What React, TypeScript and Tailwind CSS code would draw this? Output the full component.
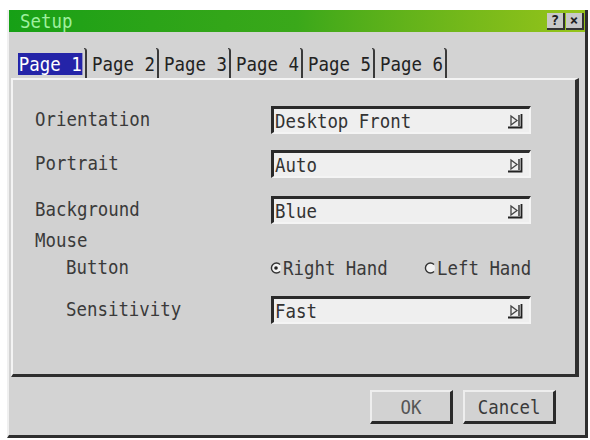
import React from "react";

const mono = { fontFamily: '"DejaVu Sans Mono", "Liberation Mono", monospace' };

// Narrow monospace text, like the projector's on-screen font
function T({ children, className = "" }: { children: React.ReactNode; className?: string }) {
  return (
    <span
      className={"inline-block origin-left scale-x-[0.87] whitespace-pre text-[20px] leading-none " + className}
      style={mono}
    >
      {children}
    </span>
  );
}

function ArrowBox() {
  return (
    <svg width="18" height="16" viewBox="0 0 18 16" className="shrink-0">
      <path d="M5 3 L11 7.5 L5 12 Z" fill="none" stroke="#444" strokeWidth="1.3" />
      <path d="M13 2 V13" stroke="#444" strokeWidth="1.6" />
      <path d="M2 14.5 H15.5 V1" fill="none" stroke="#222" strokeWidth="1.8" />
    </svg>
  );
}

function Select({ value }: { value: string }) {
  return (
    <div className="flex h-[28px] w-[260px] items-center justify-between overflow-hidden border-l-[3px] border-t-[3px] border-b-[2px] border-r-[2px] border-l-[#2a2a2a] border-t-[#2a2a2a] border-b-[#f4f4f4] border-r-[#f4f4f4] bg-[#efefef] pl-[1px] pr-[5px]">
      <T className="text-[#333]">{value}</T>
      <ArrowBox />
    </div>
  );
}

function Radio({ checked }: { checked: boolean }) {
  return (
    <svg width="12" height="12" viewBox="0 0 12 12" className="mr-[1px] shrink-0">
      <circle cx="6" cy="6" r="5" fill="#f2f2f2" />
      <path d="M10 2.5 A5 5 0 1 0 10 9.5" fill="none" stroke="#333" strokeWidth="1.4" />
      {checked && <circle cx="6" cy="6" r="1.8" fill="#222" />}
    </svg>
  );
}

function Tab({ label, active }: { label: string; active?: boolean }) {
  return (
    <div className="relative flex h-[32px] w-[72px] items-end pb-[3px]">
      {active ? (
        <span
          className="ml-[1px] inline-block origin-left scale-x-[0.87] whitespace-pre bg-[#2424a8] px-[1px] text-[20px] leading-[22px] text-white"
          style={mono}
        >
          {label}
        </span>
      ) : (
        <span
          className="ml-[3px] inline-block origin-left scale-x-[0.87] whitespace-pre text-[20px] leading-[22px] text-[#222]"
          style={mono}
        >
          {label}
        </span>
      )}
      <div className="absolute right-[2px] top-[2px] h-[30px] w-[3px] rounded-tr-[4px] border-r-[2px] border-t-[1px] border-r-[#3a3a3a] border-t-[#3a3a3a]" />
    </div>
  );
}

function Btn({ label, wide }: { label: string; wide?: boolean }) {
  return (
    <div
      className={
        "flex h-[34px] items-center justify-center border-l-[2px] border-t-[2px] border-b-[3px] border-r-[3px] border-l-[#eeeeee] border-t-[#eeeeee] border-b-[#2a2a2a] border-r-[#2a2a2a] bg-[#d2d2d2] " +
        (wide ? "w-[93px] text-[#3a3a3a]" : "w-[83px] text-[#555]")
      }
    >
      <span
        className="inline-block origin-center scale-x-[0.87] whitespace-pre text-[20px] leading-none"
        style={mono}
      >
        {label}
      </span>
    </div>
  );
}

export default function App() {
  return (
    <div className="h-[440px] w-[590px] overflow-hidden bg-white pl-[7px] pt-[10px]">
      <div className="flex h-[428px] w-[581px] flex-col border-b-[3px] border-l-[2px] border-r-[3px] border-b-[#2e2e2e] border-l-[#f0f0f0] border-r-[#2e2e2e] bg-[#d3d3d3]">
        {/* title bar */}
        <div className="flex h-[22px] items-center justify-between bg-gradient-to-r from-[#16a016] via-[#3aa81a] to-[#96c41a] pl-[11px] pr-[1px]">
          <T className="text-[18px] text-[#9ef09e]">Setup</T>
          <div className="flex gap-[1px]">
            <div className="flex h-[17px] w-[18px] items-center justify-center border-b-[2px] border-r-[2px] border-b-[#333] border-r-[#333] bg-[#c8c8c8] text-[14px] font-bold leading-none text-[#222]" style={mono}>
              ?
            </div>
            <div className="flex h-[17px] w-[18px] items-center justify-center border-b-[2px] border-r-[2px] border-b-[#333] border-r-[#333] bg-[#c8c8c8] text-[14px] font-bold leading-none text-[#222]" style={mono}>
              ×
            </div>
          </div>
        </div>

        {/* tabs */}
        <div className="flex h-[46px] items-end pl-[8px]">
          <Tab label="Page 1" active />
          <Tab label="Page 2" />
          <Tab label="Page 3" />
          <Tab label="Page 4" />
          <Tab label="Page 5" />
          <Tab label="Page 6" />
        </div>

        {/* panel */}
        <div className="ml-[2px] mr-[6px] flex h-[299px] flex-col border-b-[3px] border-l-[2px] border-r-[4px] border-t-[2px] border-b-[#2e2e2e] border-l-[#f4f4f4] border-r-[#2e2e2e] border-t-[#f4f4f4] bg-[#d1d1d1] pl-[22px] pt-[26px] text-[#3a3a3a]">
          <div className="flex h-[28px] items-center">
            <div className="w-[236px]"><T>Orientation</T></div>
            <Select value="Desktop Front" />
          </div>
          <div className="mt-[16px] flex h-[28px] items-center">
            <div className="w-[236px]"><T>Portrait</T></div>
            <Select value="Auto" />
          </div>
          <div className="mt-[18px] flex h-[28px] items-center">
            <div className="w-[236px]"><T>Background</T></div>
            <Select value="Blue" />
          </div>
          <div className="mt-[4px] flex h-[24px] items-center">
            <T>Mouse</T>
          </div>
          <div className="mt-[3px] flex h-[26px] items-center">
            <div className="w-[235px] pl-[31px]"><T>Button</T></div>
            <div className="flex w-[154px] items-center">
              <Radio checked />
              <T>Right Hand</T>
            </div>
            <div className="flex items-center">
              <Radio checked={false} />
              <T>Left Hand</T>
            </div>
          </div>
          <div className="mt-[15px] flex h-[28px] items-center">
            <div className="w-[236px] pl-[31px]"><T>Sensitivity</T></div>
            <Select value="Fast" />
          </div>
        </div>

        {/* footer */}
        <div className="flex flex-1 items-center justify-end gap-[10px] pr-[29px] pt-[2px]">
          <Btn label="OK" />
          <Btn label="Cancel" wide />
        </div>
      </div>
    </div>
  );
}
